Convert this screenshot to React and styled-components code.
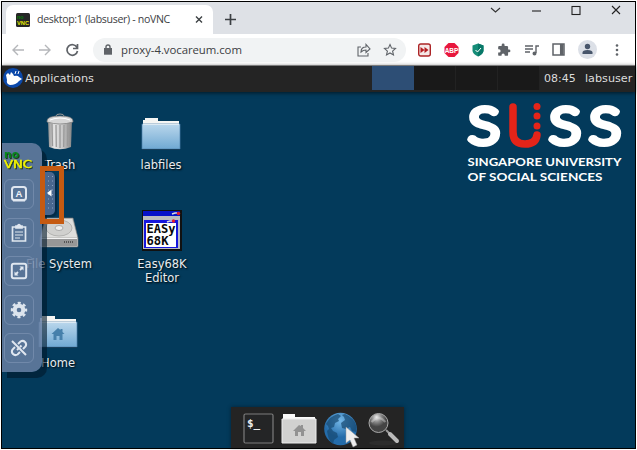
import React from "react";
import styled, { createGlobalStyle } from "styled-components";

const Global = createGlobalStyle`
  * { box-sizing: border-box; }
  body { margin: 0; background: #fff; overflow: hidden; }
  svg { display: block; flex: none; overflow: visible; }
`;

const ui = `"Open Sans", "Noto Sans", sans-serif`;
const desk = `"DejaVu Sans", sans-serif`;

const Window = styled.div`
  width: 635px; height: 448px; margin: 1px;
  border: 1px solid #000;
  display: flex; flex-direction: column;
  background: #033a5b;
`;
const TabStrip = styled.div`
  height: 32px; flex: none; background: #dee1e6;
  display: flex; align-items: flex-start; padding-left: 4px;
`;
const Tab = styled.div`
  width: 207px; height: 29px; margin-top: 3px; padding: 0 10px;
  background: #fff; border-radius: 7px 7px 0 0;
  display: flex; align-items: center;
`;
const TabTitle = styled.span`
  font: 10.6px/14px ${ui}; letter-spacing: ${(p) => p.$track || 0}px;
  color: #3c4043; margin: -1px 0 0 7px; flex: 1; white-space: nowrap;
`;
const NewTab = styled.div`margin: 12px 0 0 12px;`;
const WindowButtons = styled.div`
  margin: 1px 11px 0 auto; display: flex; gap: 24px;
`;
const Toolbar = styled.div`
  height: 31px; flex: none; background: #fff;
  display: flex; align-items: center; padding: 0 11px 0 9px;
`;
const NavGroup = styled.div`display: flex; gap: 13px; width: 82px;`;
const AddressBar = styled.div`
  width: 313px; height: 24px; border-radius: 12px; background: #f1f3f4;
  display: flex; align-items: center; padding: 0 9px 0 11px; gap: 12px;
`;
const Url = styled.span`
  font: 11.4px/16px ${ui}; letter-spacing: ${(p) => p.$track || 0}px;
  color: #3c4043; flex: 1; white-space: nowrap; margin-left: -3px;
`;
const Extensions = styled.div`
  flex: 1; display: flex; align-items: center; justify-content: space-between;
  padding-left: 12px;
`;
const Panel = styled.div`
  height: 27px; flex: none; background: #242424; border-top: 1px solid #7b7b7b;
  display: flex; align-items: center; color: #dcdcdc;
  font: 11.3px/15px ${desk}; position: relative; z-index: 1;
  padding-bottom: 2px;
  box-shadow: 0 1px 4px rgba(0,0,0,.6);
`;
const MenuButton = styled.div`display: flex; align-items: center; gap: 2px; flex: 1; padding-left: 1px;`;
const Workspaces = styled.div`display: flex; width: 168px; height: 24px;`;
const Workspace = styled.div`
  width: 42px; height: 24px;
  background: ${(p) => (p.$active ? "#2d4e75" : "#191919")};
  border-right: 1px solid ${(p) => (p.$active ? "#2d4e75" : "#222")};
`;
const Clock = styled.span`width: 41px; margin-left: 4px; font-size: 11px;`;
const User = styled.span`width: 50px; font-size: 11.2px;`;

const Desktop = styled.main`flex: 1; position: relative;`;
const DesktopIcon = styled.div`
  position: absolute; left: ${(p) => p.$x}px; top: ${(p) => p.$y}px;
  width: 90px; display: flex; flex-direction: column; align-items: center;
`;
const IconLabel = styled.span`
  margin-top: ${(p) => p.$gap}px; text-align: center;
  font: 11.5px/14px ${desk}; color: #e8ecef; text-shadow: 1px 1px 2px #000;
`;
const Logo = styled.div`position: absolute; left: 464px; top: 9px;`;
const ControlBar = styled.aside`
  position: absolute; left: 0; top: 51px; width: 40px; height: 229px;
  border-radius: 0 10px 10px 0; background: rgba(103,127,162,.85);
  box-shadow: 5px 6px 0 rgba(0,24,42,.6);
  display: flex; flex-direction: column; align-items: flex-start;
  padding: 8px 0 0 2px;
`;
const BarMark = styled.svg`filter: drop-shadow(1px 1px 0 rgba(20,45,10,.85));`;
const ControlButtons = styled.div`display: flex; flex-direction: column; gap: 8.6px; margin-top: 8px;`;
const ControlButton = styled.div`
  width: 30px; height: 30px; border: 1px solid rgba(160,178,205,.35); border-radius: 6px;
  display: flex; align-items: center; justify-content: center;
`;
const Handle = styled.div`
  position: absolute; left: 43px; top: 80px; width: 10px; height: 43px;
  background: #49678f; border-radius: 0 5px 5px 0; box-shadow: 2px 2px 1px #032b46;
`;
const Highlight = styled.div`
  position: absolute; left: 38px; top: 74px; width: 24px; height: 58px;
  border: 5px solid #c55a11;
`;
const Dock = styled.div`
  position: absolute; left: 229px; bottom: 0; width: 173px; height: 41px;
  background: #242424; box-shadow: 0 0 4px rgba(0,0,0,.4);
  display: flex; align-items: center; padding: 2px 0 0 12px; gap: 7px;
`;

const VncMark = ({ size }) => (
  <svg width={size} height={size} viewBox="0 0 14 14">
    <rect width="14" height="14" rx="1.5" fill="#262626" />
    <text x="1" y="6" fontFamily="Liberation Sans" fontWeight="bold" fontSize="5.5" fill="#087f08">no</text>
    <text x="1" y="12.3" fontFamily="Liberation Sans" fontWeight="bold" fontSize="5.5" textLength="12" lengthAdjust="spacingAndGlyphs" fill="#e5e900">VNC</text>
  </svg>
);
const Line = ({ w = 16, h = 16, d, color = "#5f6368", sw = 1.4, children }) => (
  <svg width={w} height={h} viewBox={`0 0 ${w} ${h}`} fill="none" stroke={color} strokeWidth={sw}>
    {d && <path d={d} />}
    {children}
  </svg>
);

const Folder = ({ home, offset }) => (
  <svg width="40" height="36" viewBox="0 0 40 36">
    <defs>
      <linearGradient id={`fold${offset}`} x2="0" y2="1">
        <stop stopColor="#bad7ec" /><stop offset="1" stopColor="#70a9d3" />
      </linearGradient>
    </defs>
    <path d="M2 3h2V1h13v3h21v8H2z" fill="#f5f5f3" />
    <path d="M1 7h38v25H1z" fill={`url(#fold${offset})`} stroke="#4d83ac" strokeWidth=".7" />
    <path d="M2 7.5h36" stroke="#dceaf4" />
    <path d="M1 32.5h38" stroke="#173f5c" />
    {home && <path d="M20 13l-6.500 6h2v6h3v-4h3v4h3v-6h2l-2-2v-3h-2v1z" fill="#4680ab" />}
  </svg>
);
const Trash = () => (
  <svg width="28" height="37" viewBox="0 0 28 37">
    <defs>
      <linearGradient id="metal">
        <stop stopColor="#8c8c8c" /><stop offset=".25" stopColor="#e5e5e5" />
        <stop offset=".6" stopColor="#c8c8c8" /><stop offset="1" stopColor="#858585" />
      </linearGradient>
    </defs>
    <path d="M2 7l1 27q11 4.500 22 0L26 7z" fill="url(#metal)" />
    <path d="M6 11l.5 22M10 12l.3 22M14 12v23M18 12l-.3 22M22 11l-.5 22" stroke="#999" strokeWidth="1.300" />
    <path d="M10 3q0-2 4-2t4 2" fill="none" stroke="#999" />
    <path d="M1 8q0-5 13-5t13 5v1q-13 4-26 0z" fill="#d7d7d7" stroke="#777" strokeWidth=".7" />
    <path d="M4 7q10-4 20 0" fill="none" stroke="#fff" />
  </svg>
);
const Drive = () => (
  <svg width="40" height="31" viewBox="0 0 40 31">
    <path d="M6 1h28l5 20v8q0 1-1 1H2q-1 0-1-1v-8z" fill="#c7c7c5" stroke="#777" strokeWidth=".6" />
    <path d="M7 2h26l5 18H2z" fill="#dededc" />
    <ellipse cx="20" cy="11" rx="13" ry="8" fill="#d0d0ce" stroke="#b3b3b1" />
    <ellipse cx="20" cy="11" rx="4" ry="2.500" fill="#eee" stroke="#aaa" />
    <path d="M2 22h36v7H2z" fill="#979797" />
    <path d="M2 21.500h36" stroke="#f3f3f3" /><path d="M25 25h9" stroke="#555" strokeWidth="2" strokeDasharray="1 1" />
  </svg>
);
const Easy = () => (
  <svg width="40" height="41" viewBox="0 0 40 41">
    <path d="M0 0h40v41H0z" fill="#111" />
    <path d="M1 1h37v38H1z" fill="#b9bbc0" /><path d="M1 1h37v5H1z" fill="#0712c8" />
    <path d="M2 10h34v28H2z" fill="#1616dd" /><path d="M4 13h30v24H4z" fill="#fff" />
    <path d="M30 4l3-1h2" stroke="#ddd" strokeWidth="1.500" fill="none" /><circle cx="36.500" cy="3.500" r="1.700" fill="#e21b2c" />
    <path d="M25 12l3-1h2" stroke="#ddd" strokeWidth="1.500" fill="none" /><circle cx="31.500" cy="11" r="1.700" fill="#e21b2c" />
    <g fontFamily="DejaVu Sans Mono" fontWeight="bold" fontSize="12" fill="#080808">
      <text x="4.500" y="23" textLength="29" lengthAdjust="spacingAndGlyphs">EASy</text>
      <text x="4.500" y="35" textLength="22" lengthAdjust="spacingAndGlyphs">68K</text>
    </g>
  </svg>
);

const icons = [
  { x: 13, y: 21, label: "Trash", art: <Trash />, gap: 8 },
  { x: 114, y: 25, label: "labfiles", art: <Folder offset={1} />, gap: 5 },
  { x: 12, y: 125, label: "File System", art: <Drive />, gap: 9 },
  { x: 115, y: 118, label: <>Easy68K<br />Editor</>, art: <Easy />, gap: 6 },
  { x: 11, y: 223, label: "Home", art: <Folder home offset={2} />, gap: 5 },
];

const keyArt = [
  <Line key="a" w={18} h={18} color="#e0e7f0" sw={2}>
    <rect x="2" y="2" width="14" height="13" rx="2.500" /><path d="M3 15.500h12" />
    <text x="9" y="12" textAnchor="middle" fontFamily="Liberation Sans" fontWeight="bold" fontSize="9.500" fill="#eef2f7" stroke="none">A</text>
  </Line>,
  <Line key="b" w={18} h={20} color="#e0e7f0" sw={1.7}>
    <path d="M6 4H2.500v14h13V4H12" /><path d="M6 5V3h1.500q1.500-3 3 0H12v2z" fill="#e0e7f0" />
    <path d="M5 9h8M5 12h8M5 15h5" strokeWidth="1.200" />
  </Line>,
  <Line key="c" w={18} h={18} color="#e0e7f0" sw={2}>
    <rect x="1.800" y="1.800" width="14.400" height="14.400" rx="2" />
    <path d="M9.500 4.500h4v4zM4.500 9.500v4h4z" fill="#e0e7f0" stroke="none" /><path d="M12.500 5.500l-2.500 2.500M5.500 12.500L8 10" strokeWidth="1.800" />
  </Line>,
  <Line key="d" w={18} h={18} color="#dce4ed" sw={4}>
    <circle cx="9" cy="9" r="4.300" /><circle cx="9" cy="9" r="6.700" strokeWidth="3" strokeDasharray="2.900 2.362" strokeDashoffset="1.450" />
  </Line>,
  <Line key="e" w={20} h={20} color="#e0e7f0" sw={2}>
    <path d="M9 6l2.500-2.500q2.500-1.500 4.500.5t.5 4.500L14 11M11 14l-2.500 2.500q-2.500 1.500-4.500-.5t-.5-4.500L6 9M8 12l1.500-1.500M11 9l1.500-1.500M3 3l14 14" />
  </Line>,
];

const SussLogo = () => (
  <svg width="164" height="84" viewBox="0 0 164 84">
    <g fontFamily="Lato" fontWeight="300" fontSize="52" fill="#fff" stroke="#fff" strokeWidth="6" strokeLinejoin="round">
      <text x="2" y="42.500" textLength="32" lengthAdjust="spacingAndGlyphs">S</text>
      <text x="83" y="42.500" textLength="32" lengthAdjust="spacingAndGlyphs">S</text>
      <text x="123" y="42.500" textLength="32" lengthAdjust="spacingAndGlyphs">S</text>
    </g>
    <path d="M47 6v25q0 12 12 12 11 0 12-9" fill="none" stroke="#e42419" strokeWidth="7.500" strokeLinecap="round" />
    <g fill="#e42419"><circle cx="71" cy="5.500" r="3.500" /><circle cx="71" cy="15" r="3.500" /><circle cx="71" cy="25" r="3.500" /></g>
    <g fontFamily="Lato" fontWeight="bold" fontSize="12" fill="#fff">
      <text x="1.500" y="65" textLength="154" lengthAdjust="spacingAndGlyphs">SINGAPORE UNIVERSITY</text>
      <text x="1.500" y="79.500" textLength="135" lengthAdjust="spacingAndGlyphs">OF SOCIAL SCIENCES</text>
    </g>
  </svg>
);

const Terminal = () => (
  <svg width="31" height="32" viewBox="0 0 31 32">
    <rect x="1" y="1" width="29" height="29" rx="1.500" fill="#242526" stroke="#7c7c7c" strokeWidth="1.200" />
    <text x="4" y="14" fontFamily="DejaVu Sans Mono" fontWeight="bold" fontSize="11" fill="#eee">$_</text>
  </svg>
);
const Files = () => (
  <svg width="36" height="32" viewBox="0 0 36 32">
    <path d="M2 4V1h12v3h20v6H2z" fill="#fafafa" />
    <path d="M1 6h34v24H1z" fill="#d1d1d0" stroke="#ededed" />
    <path d="M18 12l-6 6h2v5h3v-4h3v4h3v-5h2l-3-3v-3h-2v1z" fill="#929292" />
  </svg>
);
const Globe = () => (
  <svg width="36" height="38" viewBox="0 0 36 38">
    <defs><radialGradient id="sea" cy=".25"><stop stopColor="#75b8e8" /><stop offset="1" stopColor="#246caa" /></radialGradient></defs>
    <circle cx="16.500" cy="19" r="16.300" fill="url(#sea)" />
    <path d="M2 14q4-8 12-10l3 2-3 3 1 2-4 2-1 4-3 1 2 3 4 2 1 4-4 3-1 4Q5 31 4 26l-1-5 2-2-1-3zM18 5l3-1q9 4 11 11v7l-4-1-2-4-4 2-4-1-1-5 4-3-1-3z" fill="#174970" opacity=".7" />
    <path d="M22 17v16l4-3 3 7 4-2-3-7h5z" fill="#eee" stroke="#999" strokeWidth=".5" />
  </svg>
);
const Search = () => (
  <svg width="36" height="38" viewBox="0 0 36 38">
    <defs><radialGradient id="lens" cx=".4" cy=".2"><stop stopColor="#eee" /><stop offset=".5" stopColor="#8a8a8a" /><stop offset="1" stopColor="#444" /></radialGradient></defs>
    <ellipse cx="16" cy="33" rx="14" ry="2.500" fill="#2c2c2c" />
    <path d="M19 20l5 5" stroke="#999" strokeWidth="2" /><path d="M23 24l7 7" stroke="#bbb" strokeWidth="4" strokeLinecap="round" />
    <circle cx="11.500" cy="13" r="9.500" fill="url(#lens)" stroke="#aaa" strokeWidth="1" />
    <path d="M4.500 12q7-8 14 0" stroke="#ddd" strokeWidth="2" fill="none" opacity=".4" />
  </svg>
);

export default function App() {
  return (
    <>
      <Global />
      <Window>
        <TabStrip>
          <Tab>
            <VncMark size={14} />
            <TabTitle $track={-0.33}>desktop:1 (labsuser) - noVNC</TabTitle>
            <Line w={8} h={8} d="M1 .5l6 6M7 .5L1 6.500" color="#3c4043" />
          </Tab>
          <NewTab><Line w={11} h={11} d="M5.500 0v11M0 5.500h11" color="#3c4043" sw={1.7} /></NewTab>
          <WindowButtons>
            <Line d="M3 5l4.500 4L12 5" color="#333" sw={1.1} />
            <Line d="M4 8h9" color="#222" sw={1.1} />
            <Line color="#222" sw={1.1}><rect x="4" y="3.500" width="8" height="8" /></Line>
            <Line d="M4 3l8 8M12 3l-8 8" color="#222" sw={1.1} />
          </WindowButtons>
        </TabStrip>
        <Toolbar>
          <NavGroup>
            <Line w={14} h={14} d="M13 7H2M7 2L2 7l5 5" color="#b5b7ba" />
            <Line w={14} h={14} d="M1 7h11M7 2l5 5-5 5" color="#b5b7ba" />
            <Line w={14} h={14} d="M12 4.500A5.300 5.300 0 1 0 12.500 8M12.500 1v4.500H8" sw={1.7} />
          </NavGroup>
          <AddressBar>
            <Line w={8} h={11} color="#5f6368"><path d="M2 5V3q0-2 2-2t2 2v2" /><rect x=".7" y="4.700" width="6.600" height="5.300" fill="#5f6368" /></Line>
            <Url $track={-0.06}>proxy-4.vocareum.com</Url>
            <Line w={14} h={14} sw={1.1} d="M4 4H1v9h10v-3M4 9q0-5 5-5V1.500L13 6 9 9.500V7q-3 0-5 2z" />
            <Line w={14} h={14} sw={1.1} d="M7 1.500l1.600 3.600 3.900.4-2.900 2.600.9 3.900L7 10l-3.500 2 .9-3.900-2.900-2.600 3.900-.4z" />
          </AddressBar>
          <Extensions>
            <svg width="13" height="14" viewBox="0 0 13 14"><rect x=".7" y="1" width="11.600" height="12" rx="2" fill="#f5e8e7" stroke="#ac2426" strokeWidth="1.400" /><path d="M2.500 4l4 3-4 3zM6.500 4l4 3-4 3z" fill="#b51e22" /></svg>
            <svg width="15" height="14" viewBox="0 0 15 14"><path d="M4.500 0h6l4 4v6l-4 4h-6l-4-4V4z" fill="#e8173d" /><text x="7.500" y="9.600" textAnchor="middle" fontFamily="Liberation Sans" fontSize="6.500" fontWeight="bold" fill="#fff">ABP</text></svg>
            <svg width="12" height="14" viewBox="0 0 12 14"><path d="M6 .5l5.500 2V8Q11 11 6 13.500 1 11 .5 8V2.500z" fill="#168d78" /><path d="M6 .5l5.500 2V8Q11 11 6 13.500z" fill="#087868" /><path d="M3.500 7l2 2 3.500-4" fill="none" stroke="#fff" /></svg>
            <svg width="14" height="14" viewBox="0 0 24 24"><path fill="#5f6368" d="M20.500 11H19V7a2 2 0 0 0-2-2h-4V3.500a2.500 2.500 0 0 0-5 0V5H4a2 2 0 0 0-2 2v3.800h1.500a2.700 2.700 0 0 1 0 5.400H2V20a2 2 0 0 0 2 2h3.800v-1.500a2.700 2.700 0 0 1 5.400 0V22H17a2 2 0 0 0 2-2v-4h1.500a2.500 2.500 0 0 0 0-5z" /></svg>
            <Line w={14} h={14} sw={1.4}><path d="M0 3h8M0 6h8M0 9h5M11 10V3h3" /><circle cx="9.500" cy="10.500" r="1.300" fill="#5f6368" /></Line>
            <Line w={13} h={13} sw={1.5}><rect x="1" y="1" width="11" height="11" /><path d="M9.700 1v11" strokeWidth="3.500" /></Line>
            <svg width="19" height="19" viewBox="0 0 19 19"><circle cx="9.500" cy="9.500" r="9.500" fill="#dce0e7" /><circle cx="9.500" cy="6.500" r="2.700" fill="#48566b" /><path d="M4.500 14v-1.500q0-2.500 5-2.500t5 2.500V14z" fill="#48566b" /></svg>
            <svg width="14" height="14" viewBox="0 0 14 14" fill="#5f6368"><circle cx="7" cy="2.500" r="1.300" /><circle cx="7" cy="7" r="1.300" /><circle cx="7" cy="11.500" r="1.300" /></svg>
          </Extensions>
        </Toolbar>
        <Panel>
          <MenuButton>
            <svg width="20" height="22" viewBox="0 0 20 22"><circle cx="10" cy="11" r="10" fill="#0b48aa" /><path d="M3 8l2-2 2 2 1-3 2 2 1 2q4-1 5 1l3 2-3 2q-3 4-9 4-4-1-3-5z" fill="#fff" /><path d="M12 7l1-3M15 7l1-3" stroke="#fff" /></svg>
            Applications
          </MenuButton>
          <Workspaces><Workspace $active /><Workspace /><Workspace /><Workspace /></Workspaces>
          <Clock>08:45</Clock><User>labsuser</User>
        </Panel>
        <Desktop>
          {icons.map((item) => (
            <DesktopIcon key={item.x + "-" + item.y} $x={item.x} $y={item.y}>
              {item.art}<IconLabel $gap={item.gap}>{item.label}</IconLabel>
            </DesktopIcon>
          ))}
          <Logo><SussLogo /></Logo>
          <ControlBar>
            <BarMark width="32" height="20" viewBox="0 0 32 20" fontFamily="DejaVu Sans" fontWeight="bold">
              <text x="0" y="6.500" fontSize="10.500" textLength="15" lengthAdjust="spacingAndGlyphs" fill="#06891a">no</text>
              <text x="0" y="16.500" fontSize="11" textLength="28" lengthAdjust="spacingAndGlyphs" fontWeight="normal" fill="#f4f500" stroke="#f4f500" strokeWidth=".5">VNC</text>
            </BarMark>
            <ControlButtons>{keyArt.map((art) => <ControlButton key={art.key}>{art}</ControlButton>)}</ControlButtons>
          </ControlBar>
          <Handle>
            <svg width="10" height="43" viewBox="0 0 10 43"><path d="M3.500 4v36M7.500 4v36" stroke="#8da4c2" strokeDasharray="1 3.500" /><path d="M2 21l4.500-3.500v7z" fill="#fff" /></svg>
          </Handle>
          <Highlight />
          <Dock><Terminal /><Files /><Globe /><Search /></Dock>
        </Desktop>
      </Window>
    </>
  );
}
